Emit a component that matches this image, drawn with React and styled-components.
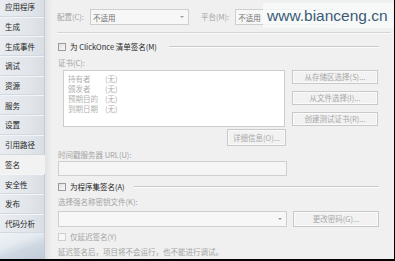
import React from "react";
import styled, { createGlobalStyle } from "styled-components";

const Global = createGlobalStyle`
  html, body { margin: 0; padding: 0; background: #f0f0f0; }
  * { box-sizing: border-box; }
`;

const FONT = `"Noto Sans CJK SC", "Noto Sans", sans-serif`;

const Frame = styled.div`
  width: 395px;
  height: 261px;
  display: flex;
  overflow: hidden;
  position: relative;
  border-right: 1px solid #000;
  border-bottom: 2px solid #000;
  font-family: ${FONT};
  font-size: 7.5px;
  background: #f0f0f0;
`;

const Sidebar = styled.div`
  width: 45px;
  flex: none;
  display: flex;
  flex-direction: column;
  border-right: 1px solid #c3cbd4;
  background: #e3e7ec;
`;

const TabList = styled.div`
  display: flex;
  flex-direction: column;
  margin-top: -3px;
`;

const Tab = styled.div`
  height: 19.7px;
  flex: none;
  display: flex;
  align-items: center;
  padding-left: 5px;
  color: #1e1e1e;
  white-space: nowrap;
  border-bottom: 1px solid ${(p) => (p.$active ? "#f2f2f2" : "#d3d9e0")};
  border-top: 1px solid ${(p) => (p.$active ? "#f2f2f2" : "#f3f5f8")};
  background: ${(p) =>
    p.$active
      ? "#f2f2f2"
      : "linear-gradient(90deg, #e9ecf0 0%, #e1e5ea 70%, #d8dde4 100%)"};
  margin-right: ${(p) => (p.$active ? "-1px" : "0")};
`;

const SideFill = styled.div`
  flex: 1;
  background: linear-gradient(160deg, #eef2f6 0%, #e6ebf1 35%, #cfd8e2 60%, #c0ccd8 100%);
`;

const Content = styled.div`
  flex: 1;
  display: flex;
  flex-direction: column;
  padding: 9px 0 0 12px;
  box-shadow: inset 7px 0 6px -5px rgba(60, 70, 90, 0.12);
  color: #a3a3a3;
`;

const Row = styled.div`
  display: flex;
  align-items: center;
  height: ${(p) => p.$h}px;
  margin-top: ${(p) => p.$mt || 0}px;
  flex: none;
`;

const Label = styled.span`
  color: ${(p) => (p.$dark ? "#1e1e1e" : "#a3a3a3")};
  white-space: nowrap;
  line-height: 1;
  margin-left: ${(p) => p.$ml || 0}px;
`;

const Select = styled.div`
  width: ${(p) => p.$w}px;
  height: ${(p) => p.$h || 16}px;
  margin-left: ${(p) => p.$ml || 0}px;
  flex: none;
  background: #f7f7f7;
  border: 1px solid #cfcfcf;
  display: flex;
  align-items: center;
  padding-left: 2px;
  color: #707070;
  position: relative;
`;

const Arrow = styled.span`
  position: absolute;
  right: 4px;
  top: 50%;
  margin-top: -1px;
  width: 0;
  height: 0;
  border-left: 2px solid transparent;
  border-right: 2px solid transparent;
  border-top: 2px solid #9a9a9a;
`;

const Divider = styled.div`
  height: 2px;
  margin-top: 7px;
  margin-right: 3px;
  border-top: 1px solid #d6d6d6;
  border-bottom: 1px solid #fbfbfb;
  flex: none;
`;

const Check = styled.span`
  width: 8px;
  height: 8px;
  flex: none;
  margin-left: 1px;
  border: 1px solid ${(p) => (p.$disabled ? "#cfcfcf" : "#9b9b9b")};
  background: ${(p) => (p.$disabled ? "#f7f7f7" : "linear-gradient(135deg, #e0e0e0, #f8f8f8)")};
`;

const HeadLine = styled.div`
  flex: none;
  width: ${(p) => p.$w}px;
  margin-left: auto;
  margin-right: 15px;
  height: 2px;
  border-top: 1px solid #c8c8c8;
  border-bottom: 1px solid #fdfdfd;
`;

const CertRow = styled.div`
  display: flex;
  margin-top: 3px;
  height: 57px;
  flex: none;
`;

const CertBox = styled.div`
  width: 222px;
  margin-left: 6px;
  background: #ffffff;
  border: 1px solid #cdcdcd;
  padding: 3px 0 0 4px;
  display: grid;
  grid-template-columns: 37px auto;
  grid-auto-rows: 10px;
  align-content: start;
  align-items: center;
  justify-content: start;
  color: #b0b0b0;
  line-height: 1;
`;

const ButtonCol = styled.div`
  display: flex;
  flex-direction: column;
  gap: 7px;
  margin-left: 7px;
`;

const Button = styled.div`
  width: ${(p) => p.$w}px;
  height: ${(p) => p.$h || 14}px;
  flex: none;
  margin-left: ${(p) => p.$ml || 0}px;
  border: 1px solid #c9c9c9;
  box-shadow: inset 0 0 0 1px #fafafa;
  background: #f2f2f2;
  display: flex;
  align-items: center;
  justify-content: center;
  color: #a8a8a8;
  white-space: nowrap;
  line-height: 1;
`;

const TextInput = styled.div`
  width: 229px;
  height: 15px;
  margin-top: 2px;
  flex: none;
  margin-left: 1px;
  background: #f5f5f5;
  border: 1px solid #cfcfcf;
`;

const Watermark = styled.div`
  position: absolute;
  left: 263px;
  top: 3px;
  width: 130px;
  height: 25px;
  background: rgba(248, 250, 250, 0.85);
  display: flex;
  align-items: center;
  padding-left: 4px;
  font-family: "Liberation Sans", Arial, sans-serif;
  font-size: 15.5px;
  color: #3d5b76;
  letter-spacing: 0;
  white-space: nowrap;
`;

const tabs = [
  "应用程序",
  "生成",
  "生成事件",
  "调试",
  "资源",
  "服务",
  "设置",
  "引用路径",
  "签名",
  "安全性",
  "发布",
  "代码分析",
];

const certRows = [
  ["持有者", "(无)"],
  ["颁发者", "(无)"],
  ["预期目的", "(无)"],
  ["到期日期", "(无)"],
];

export default function App() {
  return (
    <>
      <Global />
      <Frame>
        <Sidebar>
          <TabList>
            {tabs.map((t) => (
              <Tab key={t} $active={t === "签名"}>
                {t}
              </Tab>
            ))}
          </TabList>
          <SideFill />
        </Sidebar>
        <Content>
          <Row $h={16}>
            <Label>配置(C):</Label>
            <Select $w={99} $ml={6}>
              不适用
              <Arrow />
            </Select>
            <Label $ml={12}>平台(M):</Label>
            <Select $w={100} $ml={6}>
              不适用
              <Arrow />
            </Select>
          </Row>
          <Divider />
          <Row $h={10} $mt={8}>
            <Check />
            <Label $dark $ml={4}>为 ClickOnce 清单签名(M)</Label>
            <HeadLine $w={210} />
          </Row>
          <Row $h={9} $mt={6}>
            <Label $ml={1}>证书(C):</Label>
          </Row>
          <CertRow>
            <CertBox>
              {certRows.map(([k, v]) => (
                <React.Fragment key={k}>
                  <span>{k}</span>
                  <span>{v}</span>
                </React.Fragment>
              ))}
            </CertBox>
            <ButtonCol>
              <Button $w={86}>从存储区选择(S)...</Button>
              <Button $w={86}>从文件选择(I)...</Button>
              <Button $w={86}>创建测试证书(R)...</Button>
            </ButtonCol>
          </CertRow>
          <Row $h={17} $mt={2}>
            <Button $w={59} $h={17} $ml={170}>详细信息(O)...</Button>
          </Row>
          <Row $h={8} $mt={5}>
            <Label $ml={1}>时间戳服务器 URL(U):</Label>
          </Row>
          <TextInput />
          <Row $h={10} $mt={6}>
            <Check />
            <Label $dark $ml={4}>为程序集签名(A)</Label>
            <HeadLine $w={245} />
          </Row>
          <Row $h={10} $mt={5}>
            <Label $ml={1}>选择强名称密钥文件(K):</Label>
          </Row>
          <Row $h={16} $mt={4}>
            <Select $w={229} $ml={1}>
              <Arrow />
            </Select>
            <Button $w={86} $h={16} $ml={6}>更改密码(G)...</Button>
          </Row>
          <Row $h={10} $mt={5}>
            <Check $disabled />
            <Label $ml={4}>仅延迟签名(Y)</Label>
          </Row>
          <Row $h={10} $mt={5}>
            <Label $ml={1}>延迟签名后，项目将不会运行，也不能进行调试。</Label>
          </Row>
        </Content>
        <Watermark>www.bianceng.cn</Watermark>
      </Frame>
    </>
  );
}
